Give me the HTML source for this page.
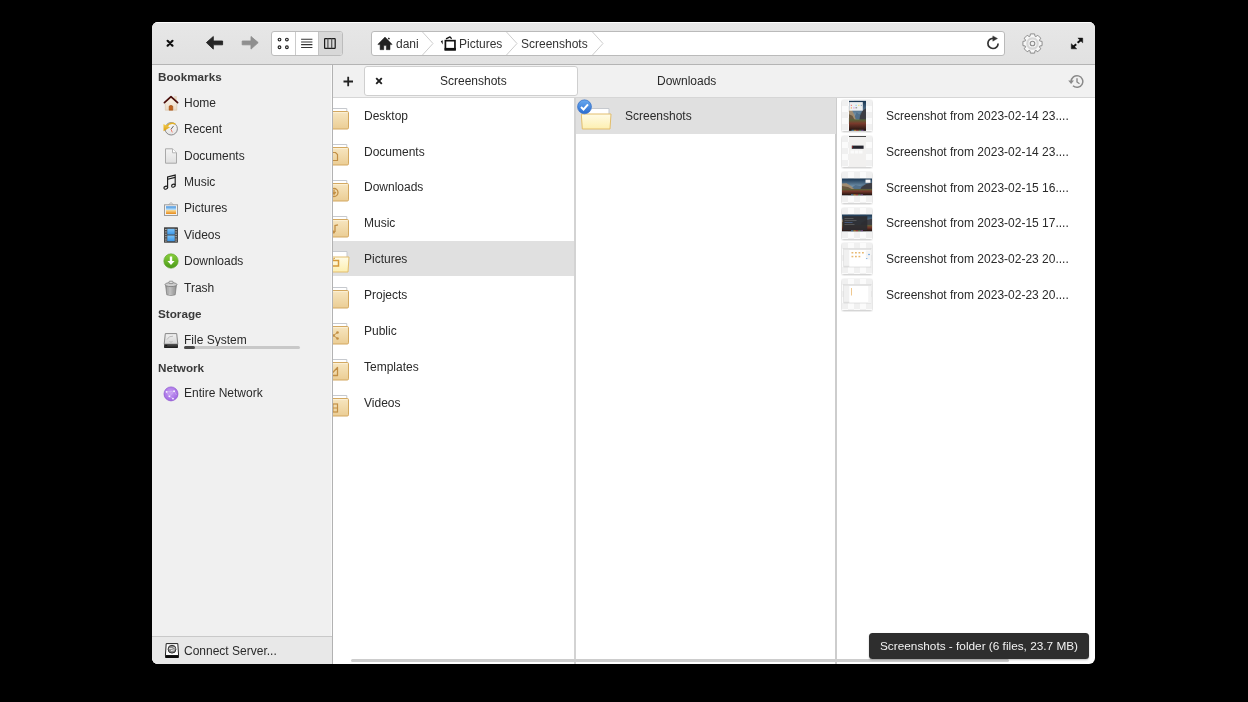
<!DOCTYPE html>
<html><head><meta charset="utf-8">
<style>
*{box-sizing:border-box}
html,body{margin:0;padding:0;width:1248px;height:702px;background:#000;overflow:hidden;font-family:"Liberation Sans",sans-serif;color:#333}
.a{position:absolute}
#win{position:absolute;left:152px;top:22px;width:943px;height:642px;border-radius:6px;overflow:hidden;background:#fff}
#hdr{position:absolute;left:0;top:0;width:943px;height:43px;background:linear-gradient(#e7e7e7,#e1e1e1);border-bottom:1px solid #b4b4b4;box-shadow:inset 0 1px 0 rgba(255,255,255,.85)}
#side{position:absolute;left:0;top:43px;width:181px;height:599px;background:#f0f0f0;border-right:1px solid #b2b2b2;box-shadow:inset -1px 0 0 #f9f9f9}
#tabs{position:absolute;left:181px;top:43px;width:762px;height:33px;background:#f1f1f1;border-bottom:1px solid #d6d6d6}
.t{position:absolute;font-size:12px;white-space:nowrap;line-height:14px;will-change:transform}
.ic{position:absolute;width:16px;height:16px}
.fi{position:absolute;width:32px;height:36px}
.th{position:absolute;width:32px;height:34px}
</style></head><body>
<div id="win">
<div id="hdr">
<svg class="a" style="left:14px;top:17px" width="10" height="10" viewBox="0 0 10 10"><path d="M1.6 1.8L6.5 6.7M6.5 1.8L1.6 6.7" stroke="#111" stroke-width="2.2" stroke-linecap="round"/></svg>
<svg class="a" style="left:48px;top:8px" width="64" height="26" viewBox="0 0 64 26"><path d="M6.4 12.6L13.3 6.5V11H22.6V14.8H13.3V19.1Z" fill="#262626" stroke="#262626" stroke-width="0.9" stroke-linejoin="round"/></svg>
<svg class="a" style="left:48px;top:8px" width="64" height="26" viewBox="0 0 64 26"><path d="M58.2 12.6L51 6.5V11H42.2V14.8H51V19.1Z" fill="#8f8f8f" stroke="#8f8f8f" stroke-width="0.9" stroke-linejoin="round"/></svg>
<div class="a" style="left:119px;top:9px;width:72px;height:25px;border:1px solid #bcbcbc;border-radius:3px;background:#fff;overflow:hidden">
<div class="a" style="left:22.5px;top:0;width:1.5px;height:23px;background:#cbcbcb"></div>
<div class="a" style="left:46px;top:0;width:25px;height:23px;background:#d8d8d8;border-left:1px solid #c4c4c4"></div>
</div>
<svg class="a" style="left:118px;top:8px" width="74" height="27" viewBox="0 0 74 27">
<g fill="none" stroke="#222" stroke-width="1.15"><circle cx="9.5" cy="9.6" r="1.35"/><circle cx="16.9" cy="9.6" r="1.35"/><circle cx="9.5" cy="17.2" r="1.35"/><circle cx="16.9" cy="17.2" r="1.35"/></g>
<g stroke="#333" stroke-width="1.05"><path d="M31.1 9.2H42.4M31.1 11.9H42.4M31.1 14.6H42.4M31.1 17.4H42.4"/></g>
<g fill="none" stroke="#1c1c1c" stroke-width="1.25"><rect x="54.6" y="8.6" width="10.6" height="9.7" rx="0.6"/><path d="M57.9 8.6V18.3M61.7 8.6V18.3" stroke="#555"/></g>
</svg>
<div class="a" style="left:219px;top:9px;width:634px;height:25px;border:1px solid #bababa;border-radius:3px;background:#fff"></div>
<svg class="a" style="left:222px;top:11px" width="24" height="20" viewBox="0 0 24 20"><path d="M11 4.1L3.9 11.2Q3.7 11.6 4.2 11.6H6.1V16.7H9.8V12.6H12.3V16.7H16V11.6H17.8Q18.3 11.6 18 11.2Z" fill="#222" stroke="#222" stroke-width="0.5" stroke-linejoin="round"/><rect x="14.1" y="4.8" width="1.6" height="1.5" fill="#222" transform="rotate(40 14.9 5.5)"/></svg>
<div class="t" style="left:243.8px;top:14.64px;font-size:12px;color:#333;font-weight:400;">dani</div>
<svg class="a" style="left:270px;top:10px" width="12" height="23" viewBox="0 0 12 23"><path d="M0.5 0L11 11.5L0.5 23" fill="none" stroke="#cdcdcd" stroke-width="1"/></svg>
<svg class="a" style="left:286px;top:11px" width="22" height="20" viewBox="0 0 22 20"><rect x="7.4" y="7.65" width="9.55" height="9" fill="none" stroke="#111" stroke-width="1.7"/><rect x="6.6" y="14.9" width="11.2" height="2.6" fill="#111"/><path d="M8 5.9L12 3.9L13.6 5.7" fill="none" stroke="#111" stroke-width="1.3" stroke-linejoin="round"/><path d="M2.8 8.3L4.7 7.3V11.4Z" fill="#111"/></svg>
<div class="t" style="left:306.6px;top:14.64px;font-size:12px;color:#333;font-weight:400;">Pictures</div>
<svg class="a" style="left:354px;top:10px" width="12" height="23" viewBox="0 0 12 23"><path d="M0.5 0L11 11.5L0.5 23" fill="none" stroke="#cdcdcd" stroke-width="1"/></svg>
<div class="t" style="left:369.2px;top:14.64px;font-size:12px;color:#333;font-weight:400;">Screenshots</div>
<svg class="a" style="left:439.5px;top:10px" width="12" height="23" viewBox="0 0 12 23"><path d="M0.5 0L11 11.5L0.5 23" fill="none" stroke="#cdcdcd" stroke-width="1"/></svg>
<svg class="a" style="left:830px;top:10px" width="22" height="22" viewBox="0 0 22 22"><path d="M11.2 6.3A5.1 5.1 0 1 0 16.1 11.4" fill="none" stroke="#333" stroke-width="1.7"/><path d="M10.8 3.9V9.2L15.5 6.5Z" fill="#333" stroke="#333" stroke-width="0.4" stroke-linejoin="round"/></svg>
<svg class="a" style="left:869px;top:10px" width="23" height="24" viewBox="0 0 23 24"><path d="M8.95 4.34 L9.42 1.92 L13.58 1.92 L14.05 4.34 L14.76 4.63 L16.80 3.26 L19.74 6.20 L18.37 8.24 L18.66 8.95 L21.08 9.42 L21.08 13.58 L18.66 14.05 L18.37 14.76 L19.74 16.80 L16.80 19.74 L14.76 18.37 L14.05 18.66 L13.58 21.08 L9.42 21.08 L8.95 18.66 L8.24 18.37 L6.20 19.74 L3.26 16.80 L4.63 14.76 L4.34 14.05 L1.92 13.58 L1.92 9.42 L4.34 8.95 L4.63 8.24 L3.26 6.20 L6.20 3.26 L8.24 4.63Z" transform="translate(0 0.8)" fill="#000" opacity="0.06"/><path d="M8.95 4.34 L9.42 1.92 L13.58 1.92 L14.05 4.34 L14.76 4.63 L16.80 3.26 L19.74 6.20 L18.37 8.24 L18.66 8.95 L21.08 9.42 L21.08 13.58 L18.66 14.05 L18.37 14.76 L19.74 16.80 L16.80 19.74 L14.76 18.37 L14.05 18.66 L13.58 21.08 L9.42 21.08 L8.95 18.66 L8.24 18.37 L6.20 19.74 L3.26 16.80 L4.63 14.76 L4.34 14.05 L1.92 13.58 L1.92 9.42 L4.34 8.95 L4.63 8.24 L3.26 6.20 L6.20 3.26 L8.24 4.63Z" fill="#f7f7f7" stroke="#8e8e8e" stroke-width="1" stroke-linejoin="round"/><circle cx="11.5" cy="11.5" r="5.2" fill="none" stroke="#d6d6d6" stroke-width="2.2"/><circle cx="11.5" cy="11.5" r="2.3" fill="#f2f2f2" stroke="#8e8e8e" stroke-width="1.1"/></svg>
<svg class="a" style="left:912px;top:10px" width="26" height="22" viewBox="0 0 26 22"><g fill="#111" stroke="#111" stroke-linejoin="round" stroke-width="0.5"><path d="M13.9 6.1H18.7V10.8Z"/><path d="M7.3 11.7V16.8H12.7Z"/></g><path d="M17 8L13.6 10.8M8.8 15.2L12.2 12.3" stroke="#111" stroke-width="2"/></svg>
</div>
<div id="side"><div class="a" style="left:0;top:-1px;width:180px;height:600px">
<div class="t" style="left:5.6px;top:6.05px;font-size:11.7px;color:#3a3a3a;font-weight:700;">Bookmarks</div>
<div class="t" style="left:31.6px;top:31.74px;font-size:12px;color:#2a2a2a;font-weight:400;">Home</div>
<div class="ic" style="left:11px;top:30.9px"><svg width="16" height="16" viewBox="0 0 16 16"><defs><linearGradient id="hw" x1="0" y1="0" x2="0" y2="1"><stop offset="0" stop-color="#fbf4ea"/><stop offset="1" stop-color="#eadbc6"/></linearGradient></defs>
<rect x="11.2" y="1.1" width="2.6" height="4.5" fill="#e6d6c0"/>
<path d="M2.3 7.4L8 2.6L13.8 7.4V15.2H2.3Z" fill="url(#hw)" stroke="#d8c4a8" stroke-width="0.6"/>
<path d="M1.4 7.6L8 1.6L14.6 7.6" fill="none" stroke="#4a0d0a" stroke-width="1.7" stroke-linecap="round" stroke-linejoin="round"/>
<path d="M6.1 15.2V11.2Q7.95 9.5 9.8 11.2V15.2Z" fill="#c0631e" stroke="#9a4a12" stroke-width="0.5"/></svg></div>
<div class="t" style="left:31.6px;top:58.14px;font-size:12px;color:#2a2a2a;font-weight:400;">Recent</div>
<div class="ic" style="left:11px;top:57.3px"><svg width="16" height="16" viewBox="0 0 16 16"><defs><linearGradient id="cf" x1="0" y1="0" x2="0" y2="1"><stop offset="0" stop-color="#fafafa"/><stop offset="1" stop-color="#e4e4e4"/></linearGradient><linearGradient id="ya" x1="0" y1="0" x2="0" y2="1"><stop offset="0" stop-color="#f6d050"/><stop offset="1" stop-color="#d89a10"/></linearGradient></defs>
<circle cx="8.2" cy="7.8" r="6.2" fill="url(#cf)" stroke="#8a8a8a" stroke-width="1"/>
<path d="M8 8.3L10.6 4.9" stroke="#555" stroke-width="0.9"/><path d="M8 8.3L9.3 11.4" stroke="#ee7060" stroke-width="0.9"/>
<path d="M3.5 5.5Q7 0.8 12.3 3" fill="none" stroke="#e2b22a" stroke-width="1.6"/><path d="M0.4 3L7.1 6.3L0.6 10.2Z" fill="url(#ya)"/></svg></div>
<div class="t" style="left:31.6px;top:84.54px;font-size:12px;color:#2a2a2a;font-weight:400;">Documents</div>
<div class="ic" style="left:11px;top:83.7px"><svg width="16" height="16" viewBox="0 0 16 16"><defs><linearGradient id="dp" x1="0" y1="0" x2="0" y2="1"><stop offset="0" stop-color="#f4f4f4"/><stop offset="1" stop-color="#e0e0e0"/></linearGradient></defs>
<path d="M2.5 0.8H9.5L13.5 4.8V15.2H2.5Z" fill="url(#dp)" stroke="#a9a9a9" stroke-width="1"/><path d="M9.5 0.8V4.8H13.5" fill="#fff" stroke="#b5b5b5" stroke-width="1"/></svg></div>
<div class="t" style="left:31.6px;top:110.94px;font-size:12px;color:#2a2a2a;font-weight:400;">Music</div>
<div class="ic" style="left:11px;top:110.1px"><svg width="16" height="16" viewBox="0 0 16 16"><g fill="none" stroke="#1e1e1e" stroke-width="1.15">
<ellipse cx="2.8" cy="13.7" rx="1.85" ry="1.45" transform="rotate(-20 2.8 13.7)"/><ellipse cx="10.4" cy="11.7" rx="1.85" ry="1.45" transform="rotate(-20 10.4 11.7)"/>
<path d="M4.6 13.3V3L12.2 1.1V11.4"/><path d="M4.6 5.3L12.2 3.4"/></g></svg></div>
<div class="t" style="left:31.6px;top:137.34px;font-size:12px;color:#2a2a2a;font-weight:400;">Pictures</div>
<div class="ic" style="left:11px;top:136.5px"><svg width="16" height="16" viewBox="0 0 16 16"><defs><linearGradient id="pc" x1="0" y1="0" x2="0" y2="1"><stop offset="0" stop-color="#3c8fe0"/><stop offset="0.45" stop-color="#bfe0f5"/><stop offset="0.55" stop-color="#f7d48a"/><stop offset="1" stop-color="#e88a1a"/></linearGradient></defs>
<path d="M5.5 4L8 1.5L10.5 4" fill="none" stroke="#9a9a9a" stroke-width="0.8"/>
<rect x="1.5" y="3.8" width="13" height="10.7" fill="#f2f2f2" stroke="#9c9c9c" stroke-width="1"/>
<rect x="3" y="5.3" width="10" height="7.7" fill="url(#pc)"/></svg></div>
<div class="t" style="left:31.6px;top:163.74px;font-size:12px;color:#2a2a2a;font-weight:400;">Videos</div>
<div class="ic" style="left:11px;top:162.9px"><svg width="16" height="16" viewBox="0 0 16 16"><defs><linearGradient id="vb" x1="0" y1="0" x2="0" y2="1"><stop offset="0" stop-color="#7cc4fa"/><stop offset="1" stop-color="#3a96e8"/></linearGradient></defs>
<rect x="1.5" y="0.8" width="13" height="14.4" fill="#4d4d4d" stroke="#333" stroke-width="0.8"/>
<rect x="4.3" y="1.8" width="7.4" height="5.7" fill="url(#vb)"/><rect x="4.3" y="8.5" width="7.4" height="5.7" fill="url(#vb)"/>
<g fill="#ccc"><rect x="2.3" y="2" width="1.2" height="1"/><rect x="2.3" y="4.4" width="1.2" height="1"/><rect x="2.3" y="6.8" width="1.2" height="1"/><rect x="2.3" y="9.2" width="1.2" height="1"/><rect x="2.3" y="11.6" width="1.2" height="1"/><rect x="2.3" y="13.6" width="1.2" height="1"/>
<rect x="12.5" y="2" width="1.2" height="1"/><rect x="12.5" y="4.4" width="1.2" height="1"/><rect x="12.5" y="6.8" width="1.2" height="1"/><rect x="12.5" y="9.2" width="1.2" height="1"/><rect x="12.5" y="11.6" width="1.2" height="1"/><rect x="12.5" y="13.6" width="1.2" height="1"/></g></svg></div>
<div class="t" style="left:31.6px;top:190.14px;font-size:12px;color:#2a2a2a;font-weight:400;">Downloads</div>
<div class="ic" style="left:11px;top:189.3px"><svg width="16" height="16" viewBox="0 0 16 16"><defs><linearGradient id="gd" x1="0" y1="0" x2="0" y2="1"><stop offset="0" stop-color="#8ad03c"/><stop offset="1" stop-color="#4a9a18"/></linearGradient></defs>
<circle cx="8" cy="8" r="7.2" fill="url(#gd)" stroke="#5a9e2a" stroke-width="0.6"/>
<path d="M6.8 3.5H9.2V8H11.6L8 12L4.4 8H6.8Z" fill="#fff"/></svg></div>
<div class="t" style="left:31.6px;top:216.54px;font-size:12px;color:#2a2a2a;font-weight:400;">Trash</div>
<div class="ic" style="left:11px;top:215.7px"><svg width="16" height="16" viewBox="0 0 16 16"><defs><linearGradient id="tc" x1="0" y1="0" x2="1" y2="0"><stop offset="0" stop-color="#8c8c8c"/><stop offset="0.4" stop-color="#d8d8d8"/><stop offset="1" stop-color="#8a8a8a"/></linearGradient></defs>
<path d="M2.6 5.5L3.8 14.8Q8 16.2 12.2 14.8L13.4 5.5Z" fill="url(#tc)" stroke="#7a7a7a" stroke-width="0.7"/>
<path d="M6 6.5V14M8 6.7V14.6M10 6.5V14" stroke="#9a9a9a" stroke-width="0.7"/>
<ellipse cx="8" cy="4.6" rx="6" ry="2" fill="#cfcfcf" stroke="#777" stroke-width="0.8"/><rect x="6" y="1.2" width="4" height="2.4" rx="0.8" fill="#e0e0e0" stroke="#777" stroke-width="0.7"/></svg></div>
<div class="t" style="left:5.6px;top:243.25px;font-size:11.7px;color:#3a3a3a;font-weight:700;">Storage</div>
<div class="t" style="left:31.6px;top:268.64px;font-size:12px;color:#2a2a2a;font-weight:400;">File System</div>
<div class="ic" style="left:11px;top:269px"><svg width="16" height="16" viewBox="0 0 16 16"><defs><linearGradient id="fs" x1="0" y1="0" x2="0" y2="1"><stop offset="0" stop-color="#f2f2f2"/><stop offset="1" stop-color="#d4d4d4"/></linearGradient><linearGradient id="fsb" x1="0" y1="0" x2="0" y2="1"><stop offset="0" stop-color="#555"/><stop offset="1" stop-color="#1a1a1a"/></linearGradient></defs>
<path d="M2.3 0.6H13.7L14.8 11.2H1.2Z" fill="url(#fs)" stroke="#7a7a7a" stroke-width="0.9" stroke-linejoin="round"/>
<path d="M4 6.5Q6 2.6 10 3.2M6.5 8.5Q8 10 9.5 8.5" fill="none" stroke="#b0b0b0" stroke-width="0.8"/>
<rect x="1" y="11" width="14" height="3.9" rx="0.7" fill="url(#fsb)"/><rect x="2.2" y="12.2" width="2" height="0.9" fill="#111"/></svg></div>
<div class="ic" style="left:11px;top:321.5px"><svg width="16" height="16" viewBox="0 0 16 16"><defs><radialGradient id="nw" cx="0.45" cy="0.4" r="0.7"><stop offset="0" stop-color="#c9a0f4"/><stop offset="1" stop-color="#9a5ee0"/></radialGradient></defs>
<circle cx="8" cy="7.9" r="7" fill="url(#nw)" stroke="#8d54d0" stroke-width="0.7"/>
<path d="M3.6 5.8L11.1 5.2L6.4 10.3L3.6 5.8M6.4 10.3L10 12.6M11.1 5.2L13.5 9" fill="none" stroke="#dcc4f8" stroke-width="0.6" opacity="0.8"/>
<g fill="#fff" opacity="0.9"><circle cx="3.6" cy="5.8" r="0.9"/><circle cx="11.1" cy="5.2" r="0.9"/><circle cx="6.4" cy="10.3" r="0.9"/><circle cx="10" cy="12.6" r="0.9"/></g></svg></div>
<div class="a" style="left:32px;top:282px;width:116px;height:3px;border-radius:2px;background:#c8c8c8"><div class="a" style="left:0;top:0;width:11px;height:3px;border-radius:2px;background:#4a4a4a"></div></div>
<div class="t" style="left:5.6px;top:296.75px;font-size:11.7px;color:#3a3a3a;font-weight:700;">Network</div>
<div class="t" style="left:31.6px;top:322.14px;font-size:12px;color:#2a2a2a;font-weight:400;">Entire Network</div>
<div class="a" style="left:0;top:572px;width:180px;height:28px;background:#e8e8e8;border-top:1px solid #c9c9c9"></div>
<div class="t" style="left:31.6px;top:579.64px;font-size:12px;color:#2a2a2a;font-weight:400;">Connect Server...</div>
<div class="ic" style="left:12px;top:578.5px"><svg width="16" height="16" viewBox="0 0 16 16">
<path d="M2.2 0.6H13.8L14.6 12.6H1.4Z" fill="#fff" stroke="#222" stroke-width="1" stroke-linejoin="round"/>
<rect x="1.1" y="12.2" width="13.8" height="2.8" rx="0.7" fill="#0c0c0c"/>
<circle cx="8" cy="6.2" r="3.9" fill="#8c8c8c" stroke="#333" stroke-width="1"/><path d="M5 5.6H8.5M7 7.6L10.5 6.8M9.5 4L11 5.5" stroke="#f0f0f0" stroke-width="0.9"/></svg></div>
</div></div>
<div id="tabs">
<svg class="a" style="left:10px;top:11px" width="11" height="11" viewBox="0 0 11 11"><path d="M5.2 0.8V10.3M0.5 5.5H10" stroke="#222" stroke-width="1.8"/></svg>
<div class="a" style="left:31px;top:1px;width:214px;height:29.5px;background:#fff;border:1px solid #cfcfcf;border-radius:3px"></div>
<svg class="a" style="left:41.5px;top:12px" width="8" height="8" viewBox="0 0 8 8"><path d="M1.2 1.2L6.8 6.8M6.8 1.2L1.2 6.8" stroke="#1e1e1e" stroke-width="1.9"/></svg>
<div class="t" style="left:107.3px;top:9.24px;font-size:12px;color:#2a2a2a;font-weight:400;">Screenshots</div>
<div class="t" style="left:323.8px;top:8.74px;font-size:12px;color:#2a2a2a;font-weight:400;">Downloads</div>
<svg class="a" style="left:735px;top:9px" width="16" height="15" viewBox="0 0 16 15"><path d="M3.2 7.5A5.8 5.8 0 1 1 5 11.7" fill="none" stroke="#8a8a8a" stroke-width="1.5"/><path d="M0.2 6.5H6L3.1 10Z" fill="#8a8a8a"/><path d="M9 4.2V8L11.5 9.8" fill="none" stroke="#8a8a8a" stroke-width="1.4"/></svg>
</div>
<div class="a" style="left:181px;top:76px;width:242px;height:566px;overflow:hidden">
<div class="t" style="left:30.8px;top:10.64px;font-size:12px;color:#2a2a2a;font-weight:400;">Desktop</div>
<div class="fi" style="left:-14px;top:0.0px"><svg width="31" height="36" viewBox="0 0 31 36"><defs><linearGradient id="c10g" x1="0" y1="0" x2="0" y2="1"><stop offset="0" stop-color="#f7e6c0"/><stop offset="1" stop-color="#ebcd94"/></linearGradient></defs>
<path d="M2.5 10.5H27.8V14H2.5Z" fill="#fff" stroke="#c6c9ce" stroke-width="1"/>
<rect x="0.5" y="13.5" width="29" height="17.5" rx="1.2" fill="url(#c10g)" stroke="#d3a860" stroke-width="1"/>
<path d="M1.5 14.6H28.5" stroke="#fbf1dc" stroke-width="0.8"/></svg></div>
<div class="t" style="left:30.8px;top:46.51px;font-size:12px;color:#2a2a2a;font-weight:400;">Documents</div>
<div class="fi" style="left:-14px;top:35.87px"><svg width="31" height="36" viewBox="0 0 31 36"><defs><linearGradient id="c11g" x1="0" y1="0" x2="0" y2="1"><stop offset="0" stop-color="#f7e6c0"/><stop offset="1" stop-color="#ebcd94"/></linearGradient></defs>
<path d="M2.5 10.5H27.8V14H2.5Z" fill="#fff" stroke="#c6c9ce" stroke-width="1"/>
<rect x="0.5" y="13.5" width="29" height="17.5" rx="1.2" fill="url(#c11g)" stroke="#d3a860" stroke-width="1"/>
<path d="M1.5 14.6H28.5" stroke="#fbf1dc" stroke-width="0.8"/><path d="M12 18.5H16.5L18.5 20.5V26.5H12Z" fill="none" stroke="#c28f45" stroke-width="1.2"/></svg></div>
<div class="t" style="left:30.8px;top:82.38px;font-size:12px;color:#2a2a2a;font-weight:400;">Downloads</div>
<div class="fi" style="left:-14px;top:71.74px"><svg width="31" height="36" viewBox="0 0 31 36"><defs><linearGradient id="c12g" x1="0" y1="0" x2="0" y2="1"><stop offset="0" stop-color="#f7e6c0"/><stop offset="1" stop-color="#ebcd94"/></linearGradient></defs>
<path d="M2.5 10.5H27.8V14H2.5Z" fill="#fff" stroke="#c6c9ce" stroke-width="1"/>
<rect x="0.5" y="13.5" width="29" height="17.5" rx="1.2" fill="url(#c12g)" stroke="#d3a860" stroke-width="1"/>
<path d="M1.5 14.6H28.5" stroke="#fbf1dc" stroke-width="0.8"/><circle cx="15" cy="22.5" r="4" fill="none" stroke="#c28f45" stroke-width="1.3"/><path d="M15 19.8V23.5M13.2 22L15 24.2L16.8 22" fill="none" stroke="#c28f45" stroke-width="1.3"/></svg></div>
<div class="t" style="left:30.8px;top:118.25px;font-size:12px;color:#2a2a2a;font-weight:400;">Music</div>
<div class="fi" style="left:-14px;top:107.60999999999999px"><svg width="31" height="36" viewBox="0 0 31 36"><defs><linearGradient id="c13g" x1="0" y1="0" x2="0" y2="1"><stop offset="0" stop-color="#f7e6c0"/><stop offset="1" stop-color="#ebcd94"/></linearGradient></defs>
<path d="M2.5 10.5H27.8V14H2.5Z" fill="#fff" stroke="#c6c9ce" stroke-width="1"/>
<rect x="0.5" y="13.5" width="29" height="17.5" rx="1.2" fill="url(#c13g)" stroke="#d3a860" stroke-width="1"/>
<path d="M1.5 14.6H28.5" stroke="#fbf1dc" stroke-width="0.8"/><path d="M16 26V19.5L19 18.8" fill="none" stroke="#c28f45" stroke-width="1.3"/><circle cx="14.6" cy="26" r="1.5" fill="#c28f45"/></svg></div>
<div class="a" style="left:0;top:143.48px;width:242px;height:35px;background:#e0e0e0"></div>
<div class="t" style="left:30.8px;top:154.12px;font-size:12px;color:#2a2a2a;font-weight:400;">Pictures</div>
<div class="fi" style="left:-14px;top:143.48px"><svg width="31" height="36" viewBox="0 0 31 36"><defs><linearGradient id="c14g" x1="0" y1="0" x2="0" y2="1"><stop offset="0" stop-color="#fffbe6"/><stop offset="1" stop-color="#fdefb0"/></linearGradient></defs>
<path d="M2.5 10.5H28V16.5H2.5Z" fill="#fff" stroke="#c6c9ce" stroke-width="1"/>
<path d="M0.3 16H30L29 31H1.3Z" fill="url(#c14g)" stroke="#e2bd6c" stroke-width="1" stroke-linejoin="round"/><rect x="11.5" y="19.5" width="8" height="5.5" fill="none" stroke="#d59a3a" stroke-width="1.5"/><path d="M13.5 18.5L16 17" stroke="#d59a3a" stroke-width="1"/></svg></div>
<div class="t" style="left:30.8px;top:189.99px;font-size:12px;color:#2a2a2a;font-weight:400;">Projects</div>
<div class="fi" style="left:-14px;top:179.35px"><svg width="31" height="36" viewBox="0 0 31 36"><defs><linearGradient id="c15g" x1="0" y1="0" x2="0" y2="1"><stop offset="0" stop-color="#f7e6c0"/><stop offset="1" stop-color="#ebcd94"/></linearGradient></defs>
<path d="M2.5 10.5H27.8V14H2.5Z" fill="#fff" stroke="#c6c9ce" stroke-width="1"/>
<rect x="0.5" y="13.5" width="29" height="17.5" rx="1.2" fill="url(#c15g)" stroke="#d3a860" stroke-width="1"/>
<path d="M1.5 14.6H28.5" stroke="#fbf1dc" stroke-width="0.8"/></svg></div>
<div class="t" style="left:30.8px;top:225.86px;font-size:12px;color:#2a2a2a;font-weight:400;">Public</div>
<div class="fi" style="left:-14px;top:215.21999999999997px"><svg width="31" height="36" viewBox="0 0 31 36"><defs><linearGradient id="c16g" x1="0" y1="0" x2="0" y2="1"><stop offset="0" stop-color="#f7e6c0"/><stop offset="1" stop-color="#ebcd94"/></linearGradient></defs>
<path d="M2.5 10.5H27.8V14H2.5Z" fill="#fff" stroke="#c6c9ce" stroke-width="1"/>
<rect x="0.5" y="13.5" width="29" height="17.5" rx="1.2" fill="url(#c16g)" stroke="#d3a860" stroke-width="1"/>
<path d="M1.5 14.6H28.5" stroke="#fbf1dc" stroke-width="0.8"/><circle cx="18.5" cy="19.5" r="1.3" fill="#c28f45"/><circle cx="14.5" cy="22.5" r="1.3" fill="#c28f45"/><circle cx="18.5" cy="25.5" r="1.3" fill="#c28f45"/><path d="M18.5 19.5L14.5 22.5L18.5 25.5" fill="none" stroke="#c28f45" stroke-width="1"/></svg></div>
<div class="t" style="left:30.8px;top:261.73px;font-size:12px;color:#2a2a2a;font-weight:400;">Templates</div>
<div class="fi" style="left:-14px;top:251.08999999999997px"><svg width="31" height="36" viewBox="0 0 31 36"><defs><linearGradient id="c17g" x1="0" y1="0" x2="0" y2="1"><stop offset="0" stop-color="#f7e6c0"/><stop offset="1" stop-color="#ebcd94"/></linearGradient></defs>
<path d="M2.5 10.5H27.8V14H2.5Z" fill="#fff" stroke="#c6c9ce" stroke-width="1"/>
<rect x="0.5" y="13.5" width="29" height="17.5" rx="1.2" fill="url(#c17g)" stroke="#d3a860" stroke-width="1"/>
<path d="M1.5 14.6H28.5" stroke="#fbf1dc" stroke-width="0.8"/><path d="M18.5 18.5V26.5H11Z" fill="none" stroke="#c28f45" stroke-width="1.3" stroke-linejoin="round"/></svg></div>
<div class="t" style="left:30.8px;top:297.60px;font-size:12px;color:#2a2a2a;font-weight:400;">Videos</div>
<div class="fi" style="left:-14px;top:286.96px"><svg width="31" height="36" viewBox="0 0 31 36"><defs><linearGradient id="c18g" x1="0" y1="0" x2="0" y2="1"><stop offset="0" stop-color="#f7e6c0"/><stop offset="1" stop-color="#ebcd94"/></linearGradient></defs>
<path d="M2.5 10.5H27.8V14H2.5Z" fill="#fff" stroke="#c6c9ce" stroke-width="1"/>
<rect x="0.5" y="13.5" width="29" height="17.5" rx="1.2" fill="url(#c18g)" stroke="#d3a860" stroke-width="1"/>
<path d="M1.5 14.6H28.5" stroke="#fbf1dc" stroke-width="0.8"/><rect x="11.5" y="19" width="7" height="8" fill="none" stroke="#c28f45" stroke-width="1.2"/><path d="M11.5 23H18.5M14 19V27" stroke="#c28f45" stroke-width="1"/></svg></div>
</div>
<div class="a" style="left:422px;top:76px;width:2px;height:566px;background:#d3d3d3"></div>
<div class="a" style="left:683px;top:76px;width:2px;height:566px;background:#cdcdcd"></div>
<div class="a" style="left:424px;top:76px;width:260px;height:35.5px;background:#e0e0e0"></div>
<div class="t" style="left:472.8px;top:86.84px;font-size:12px;color:#2a2a2a;font-weight:400;">Screenshots</div>
<div class="fi" style="left:429px;top:76px"><svg width="31" height="36" viewBox="0 0 31 36"><defs><linearGradient id="c2g" x1="0" y1="0" x2="0" y2="1"><stop offset="0" stop-color="#fffbe6"/><stop offset="1" stop-color="#fdefb0"/></linearGradient></defs>
<path d="M2.5 10.5H28V16.5H2.5Z" fill="#fff" stroke="#c6c9ce" stroke-width="1"/>
<path d="M0.3 16H30L29 31H1.3Z" fill="url(#c2g)" stroke="#e2bd6c" stroke-width="1" stroke-linejoin="round"/></svg></div>
<svg class="a" style="left:423.8px;top:76.5px" width="17" height="17" viewBox="0 0 17 17"><defs><linearGradient id="ck" x1="0" y1="0" x2="0" y2="1"><stop offset="0" stop-color="#6aaaf0"/><stop offset="1" stop-color="#2a6cd0"/></linearGradient></defs><circle cx="8.5" cy="7.8" r="7.4" fill="#fff" opacity="0.5"/><circle cx="8.5" cy="7.8" r="7" fill="url(#ck)" stroke="#2a62b8" stroke-width="0.6"/><path d="M5 8L7.5 10.5L12 5.3" fill="none" stroke="#fff" stroke-width="2"/></svg>
<div class="t" style="left:734px;top:86.84px;font-size:12px;color:#2a2a2a;font-weight:400;">Screenshot from 2023-02-14 23....</div>
<div class="th" style="left:689px;top:77.0px"><svg width="32" height="34" viewBox="0 0 32 34"><defs><pattern id="t0p" x="1" y="1" width="12" height="12" patternUnits="userSpaceOnUse"><rect width="12" height="12" fill="#fbfbfb"/><rect width="6" height="6" fill="#f0f0f0"/><rect x="6" y="6" width="6" height="6" fill="#f0f0f0"/></pattern>
<filter id="t0s" x="-30%" y="-30%" width="160%" height="160%"><feGaussianBlur stdDeviation="0.9"/></filter></defs>
<rect x="1" y="1.8" width="30" height="31" rx="1" fill="#000" opacity="0.28" filter="url(#t0s)"/>
<rect x="1" y="1" width="30" height="31" fill="url(#t0p)"/><defs><linearGradient id="t0sky" x1="0" y1="0" x2="0" y2="1"><stop offset="0" stop-color="#183450"/><stop offset="0.5" stop-color="#7898b0"/><stop offset="1" stop-color="#b0c4d0"/></linearGradient>
<linearGradient id="t0gr" x1="0" y1="0" x2="0" y2="1"><stop offset="0" stop-color="#56683a"/><stop offset="0.35" stop-color="#7a3a2c"/><stop offset="1" stop-color="#1c1210"/></linearGradient></defs>
<rect x="8" y="1.8" width="17" height="30" fill="url(#t0sky)"/>
<path d="M12.25 20.40 L15.65 13.20 L18.20 15.30 L20.75 12.30 L23.30 20.40Z" fill="#52708a"/>
<path d="M8.00 10.80 L10.55 10.20 L13.10 15.30 L15.14 21.60 L8.00 23.40Z" fill="#a08c72"/>
<path d="M8.00 15.30 L11.40 16.80 L14.46 22.20 L8.00 24.30Z" fill="#6a5840"/>
<path d="M25.00 9.30 L21.60 11.40 L19.05 16.80 L18.20 22.20 L25.00 22.80Z" fill="#3e3e44"/>
<rect x="8" y="20.40" width="17" height="11.40" fill="url(#t0gr)"/><rect x="8.2" y="3.1" width="13.6" height="8.6" fill="#f8f8f8" opacity="0.95"/><g opacity="0.85"><rect x="9.8" y="5.8" width="1.2" height="1.2" fill="#f07070"/><rect x="14.5" y="5.8" width="1.2" height="1.2" fill="#80d0f0"/><rect x="17.2" y="5.8" width="1.2" height="1.2" fill="#f0e060"/><rect x="19.8" y="5.8" width="1.2" height="1.2" fill="#90a8c0"/><rect x="9.8" y="8.3" width="1.2" height="1.2" fill="#f0a040"/><rect x="12.3" y="8.3" width="1.2" height="1.2" fill="#d080e0"/><rect x="14.5" y="8.3" width="1.6" height="1" fill="#666"/></g><rect x="10.50" y="30.8" width="2.40" height="0.9" fill="#6ab0e8" opacity="0.8"/><rect x="12.90" y="30.8" width="2.40" height="0.9" fill="#f0c040" opacity="0.8"/><rect x="15.30" y="30.8" width="2.40" height="0.9" fill="#e85858" opacity="0.8"/><rect x="17.70" y="30.8" width="2.40" height="0.9" fill="#70c070" opacity="0.8"/><rect x="20.10" y="30.8" width="2.40" height="0.9" fill="#a070d0" opacity="0.8"/></svg></div>
<div class="t" style="left:734px;top:122.71px;font-size:12px;color:#2a2a2a;font-weight:400;">Screenshot from 2023-02-14 23....</div>
<div class="th" style="left:689px;top:112.87px"><svg width="32" height="34" viewBox="0 0 32 34"><defs><pattern id="t1p" x="1" y="1" width="12" height="12" patternUnits="userSpaceOnUse"><rect width="12" height="12" fill="#fbfbfb"/><rect width="6" height="6" fill="#f0f0f0"/><rect x="6" y="6" width="6" height="6" fill="#f0f0f0"/></pattern>
<filter id="t1s" x="-30%" y="-30%" width="160%" height="160%"><feGaussianBlur stdDeviation="0.9"/></filter></defs>
<rect x="1" y="1.8" width="30" height="31" rx="1" fill="#000" opacity="0.28" filter="url(#t1s)"/>
<rect x="1" y="1" width="30" height="31" fill="url(#t1p)"/><rect x="8" y="1" width="17" height="31" fill="#f1f0ef"/><rect x="8" y="1" width="17" height="1" fill="#4a4a4a"/><rect x="10.8" y="10.6" width="11.8" height="3.2" fill="#22222c"/><rect x="11" y="11.3" width="0.9" height="1.3" fill="#c82828"/><g fill="#fbfbfb"><rect x="9.5" y="15.5" width="3.5" height="3"/><rect x="13.8" y="15.5" width="3.5" height="3"/><rect x="18" y="15.5" width="3.5" height="3"/></g></svg></div>
<div class="t" style="left:734px;top:158.58px;font-size:12px;color:#2a2a2a;font-weight:400;">Screenshot from 2023-02-15 16....</div>
<div class="th" style="left:689px;top:148.74px"><svg width="32" height="34" viewBox="0 0 32 34"><defs><pattern id="t2p" x="1" y="1" width="12" height="12" patternUnits="userSpaceOnUse"><rect width="12" height="12" fill="#fbfbfb"/><rect width="6" height="6" fill="#f0f0f0"/><rect x="6" y="6" width="6" height="6" fill="#f0f0f0"/></pattern>
<filter id="t2s" x="-30%" y="-30%" width="160%" height="160%"><feGaussianBlur stdDeviation="0.9"/></filter></defs>
<rect x="1" y="1.8" width="30" height="31" rx="1" fill="#000" opacity="0.28" filter="url(#t2s)"/>
<rect x="1" y="1" width="30" height="31" fill="url(#t2p)"/><defs><linearGradient id="t2sky" x1="0" y1="0" x2="0" y2="1"><stop offset="0" stop-color="#183450"/><stop offset="0.5" stop-color="#7898b0"/><stop offset="1" stop-color="#b0c4d0"/></linearGradient>
<linearGradient id="t2gr" x1="0" y1="0" x2="0" y2="1"><stop offset="0" stop-color="#56683a"/><stop offset="0.35" stop-color="#7a3a2c"/><stop offset="1" stop-color="#1c1210"/></linearGradient></defs>
<rect x="1" y="7.5" width="30" height="16.8" fill="url(#t2sky)"/>
<path d="M8.50 17.92 L14.50 13.88 L19.00 15.06 L23.50 13.38 L28.00 17.92Z" fill="#52708a"/>
<path d="M1.00 12.54 L5.50 12.20 L10.00 15.06 L13.60 18.59 L1.00 19.60Z" fill="#a08c72"/>
<path d="M1.00 15.06 L7.00 15.90 L12.40 18.92 L1.00 20.10Z" fill="#6a5840"/>
<path d="M31.00 11.70 L25.00 12.88 L20.50 15.90 L19.00 18.92 L31.00 19.26Z" fill="#3e3e44"/>
<rect x="1" y="17.92" width="30" height="6.38" fill="url(#t2gr)"/><rect x="24.5" y="8.6" width="5" height="3.2" fill="#f6f6f6"/><rect x="10.00" y="23.4" width="2.40" height="0.9" fill="#6ab0e8" opacity="0.8"/><rect x="12.40" y="23.4" width="2.40" height="0.9" fill="#f0c040" opacity="0.8"/><rect x="14.80" y="23.4" width="2.40" height="0.9" fill="#e85858" opacity="0.8"/><rect x="17.20" y="23.4" width="2.40" height="0.9" fill="#70c070" opacity="0.8"/><rect x="19.60" y="23.4" width="2.40" height="0.9" fill="#a070d0" opacity="0.8"/></svg></div>
<div class="t" style="left:734px;top:194.45px;font-size:12px;color:#2a2a2a;font-weight:400;">Screenshot from 2023-02-15 17....</div>
<div class="th" style="left:689px;top:184.60999999999999px"><svg width="32" height="34" viewBox="0 0 32 34"><defs><pattern id="t3p" x="1" y="1" width="12" height="12" patternUnits="userSpaceOnUse"><rect width="12" height="12" fill="#fbfbfb"/><rect width="6" height="6" fill="#f0f0f0"/><rect x="6" y="6" width="6" height="6" fill="#f0f0f0"/></pattern>
<filter id="t3s" x="-30%" y="-30%" width="160%" height="160%"><feGaussianBlur stdDeviation="0.9"/></filter></defs>
<rect x="1" y="1.8" width="30" height="31" rx="1" fill="#000" opacity="0.28" filter="url(#t3s)"/>
<rect x="1" y="1" width="30" height="31" fill="url(#t3p)"/><defs><linearGradient id="t3sky" x1="0" y1="0" x2="0" y2="1"><stop offset="0" stop-color="#183450"/><stop offset="0.5" stop-color="#7898b0"/><stop offset="1" stop-color="#b0c4d0"/></linearGradient>
<linearGradient id="t3gr" x1="0" y1="0" x2="0" y2="1"><stop offset="0" stop-color="#56683a"/><stop offset="0.35" stop-color="#7a3a2c"/><stop offset="1" stop-color="#1c1210"/></linearGradient></defs>
<rect x="1" y="7.5" width="30" height="16.8" fill="url(#t3sky)"/>
<path d="M8.50 17.92 L14.50 13.88 L19.00 15.06 L23.50 13.38 L28.00 17.92Z" fill="#52708a"/>
<path d="M1.00 12.54 L5.50 12.20 L10.00 15.06 L13.60 18.59 L1.00 19.60Z" fill="#a08c72"/>
<path d="M1.00 15.06 L7.00 15.90 L12.40 18.92 L1.00 20.10Z" fill="#6a5840"/>
<path d="M31.00 11.70 L25.00 12.88 L20.50 15.90 L19.00 18.92 L31.00 19.26Z" fill="#3e3e44"/>
<rect x="1" y="17.92" width="30" height="6.38" fill="url(#t3gr)"/><rect x="1.8" y="9.2" width="24.5" height="14" fill="#2c2c30" opacity="0.93"/><g fill="#7a7a7a"><rect x="3.5" y="11.5" width="9" height="0.5"/><rect x="3.5" y="13.5" width="12" height="0.5"/><rect x="3.5" y="17.5" width="10" height="0.5"/></g><rect x="3.5" y="15.5" width="8" height="0.5" fill="#5a80c0"/><rect x="10.00" y="23.4" width="2.40" height="0.9" fill="#6ab0e8" opacity="0.8"/><rect x="12.40" y="23.4" width="2.40" height="0.9" fill="#f0c040" opacity="0.8"/><rect x="14.80" y="23.4" width="2.40" height="0.9" fill="#e85858" opacity="0.8"/><rect x="17.20" y="23.4" width="2.40" height="0.9" fill="#70c070" opacity="0.8"/><rect x="19.60" y="23.4" width="2.40" height="0.9" fill="#a070d0" opacity="0.8"/></svg></div>
<div class="t" style="left:734px;top:230.32px;font-size:12px;color:#2a2a2a;font-weight:400;">Screenshot from 2023-02-23 20....</div>
<div class="th" style="left:689px;top:220.48px"><svg width="32" height="34" viewBox="0 0 32 34"><defs><pattern id="t4p" x="1" y="1" width="12" height="12" patternUnits="userSpaceOnUse"><rect width="12" height="12" fill="#fbfbfb"/><rect width="6" height="6" fill="#f0f0f0"/><rect x="6" y="6" width="6" height="6" fill="#f0f0f0"/></pattern>
<filter id="t4s" x="-30%" y="-30%" width="160%" height="160%"><feGaussianBlur stdDeviation="0.9"/></filter></defs>
<rect x="1" y="1.8" width="30" height="31" rx="1" fill="#000" opacity="0.28" filter="url(#t4s)"/>
<rect x="1" y="1" width="30" height="31" fill="url(#t4p)"/><rect x="2.8" y="6.5" width="27.2" height="18.5" fill="#fff" stroke="#c8c8c8" stroke-width="0.5"/><rect x="2.8" y="6.5" width="27.2" height="1.4" fill="#e2e2e2"/><rect x="2.8" y="7.9" width="5.5" height="17.1" fill="#f0f0f0"/><rect x="2.8" y="23.8" width="5.5" height="1.2" fill="#ddd"/><g fill="#e8b870"><rect x="10.5" y="10" width="1.8" height="1.5"/><rect x="14" y="10" width="1.8" height="1.5"/><rect x="17.5" y="10" width="1.8" height="1.5"/><rect x="21" y="10" width="1.8" height="1.5"/><rect x="10.5" y="13.8" width="1.8" height="1.5"/><rect x="14" y="13.8" width="1.8" height="1.5"/><rect x="17.5" y="13.8" width="1.8" height="1.5"/></g><rect x="24.8" y="8.5" width="5" height="9" fill="#f4f4f4"/><circle cx="28" cy="12.5" r="0.8" fill="#5a9ae0"/><circle cx="25.8" cy="16.5" r="0.6" fill="#5a9ae0"/></svg></div>
<div class="t" style="left:734px;top:266.19px;font-size:12px;color:#2a2a2a;font-weight:400;">Screenshot from 2023-02-23 20....</div>
<div class="th" style="left:689px;top:256.35px"><svg width="32" height="34" viewBox="0 0 32 34"><defs><pattern id="t5p" x="1" y="1" width="12" height="12" patternUnits="userSpaceOnUse"><rect width="12" height="12" fill="#fbfbfb"/><rect width="6" height="6" fill="#f0f0f0"/><rect x="6" y="6" width="6" height="6" fill="#f0f0f0"/></pattern>
<filter id="t5s" x="-30%" y="-30%" width="160%" height="160%"><feGaussianBlur stdDeviation="0.9"/></filter></defs>
<rect x="1" y="1.8" width="30" height="31" rx="1" fill="#000" opacity="0.28" filter="url(#t5s)"/>
<rect x="1" y="1" width="30" height="31" fill="url(#t5p)"/><rect x="2.8" y="6.5" width="27.2" height="18.5" fill="#fff" stroke="#c8c8c8" stroke-width="0.5"/><rect x="2.8" y="6.5" width="27.2" height="1.4" fill="#e2e2e2"/><rect x="2.8" y="7.9" width="5.5" height="17.1" fill="#f0f0f0"/><rect x="2.8" y="23.8" width="5.5" height="1.2" fill="#ddd"/><rect x="10.3" y="10" width="0.7" height="7.5" fill="#e8b060"/><rect x="27.2" y="8" width="2.8" height="17" fill="#f4f4f4"/></svg></div>
<div class="a" style="left:199px;top:637px;width:658px;height:3px;border-radius:2px;background:#cdcdcd"></div>
<div class="a" style="left:717px;top:611px;width:220px;height:26px;border-radius:3.5px;background:#2e2e2e;box-shadow:0 1px 2px rgba(0,0,0,.25)"></div>
<div class="t" style="left:728.2px;top:617.31px;font-size:11.8px;color:#f2f2f2;font-weight:400;">Screenshots - folder (6 files, 23.7 MB)</div>
</div>
</body></html>
